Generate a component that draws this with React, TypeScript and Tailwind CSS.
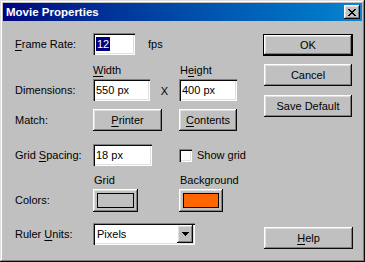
import React from 'react';

const raised =
  'bg-[#c0c0c0] shadow-[inset_-1px_-1px_#0a0a0a,inset_1px_1px_#ffffff,inset_-2px_-2px_#808080,inset_2px_2px_#dfdfdf]';
const sunken =
  'bg-white shadow-[inset_1px_1px_#808080,inset_2px_2px_#0a0a0a,inset_-1px_-1px_#ffffff,inset_-2px_-2px_#dfdfdf]';

const Label: React.FC<{ children: React.ReactNode }> = ({ children }) => (
  <div className="w-[78px] shrink-0 leading-[13px]">{children}</div>
);

const U: React.FC<{ children: React.ReactNode }> = ({ children }) => <span className="underline underline-offset-[2px]">{children}</span>;

const Field: React.FC<{ w: string; children: React.ReactNode }> = ({ w, children }) => (
  <div className={`${sunken} ${w} h-full flex items-center pl-[3px] leading-[13px]`}>{children}</div>
);

const Button: React.FC<{ className?: string; children: React.ReactNode }> = ({ className = '', children }) => (
  <div className={`${raised} h-full flex items-center justify-center leading-[13px] ${className}`}>{children}</div>
);

export default function App() {
  return (
    <div className="w-[365px] h-[262px] p-[3px] flex flex-col bg-[#c0c0c0] text-[11px] text-black font-['Liberation_Sans',Arial,sans-serif] shadow-[inset_-1px_-1px_#0a0a0a,inset_1px_1px_#dfdfdf,inset_-2px_-2px_#808080,inset_2px_2px_#ffffff]">
      {/* Title bar */}
      <div className="h-[18px] flex items-center justify-between pl-[3px] pr-[2px] bg-gradient-to-r from-[#000080] to-[#1084d0]">
        <span className="text-white font-bold text-[11.5px] leading-[14px]">Movie Properties</span>
        <div className={`${raised} w-[16px] h-[14px] flex items-center justify-center`}>
          <svg width="8" height="7" viewBox="0 0 8 7">
            <path d="M0 0h2v1h1v1h2v-1h1v-1h2v1h-1v1h-1v1h-1v1h1v1h1v1h1v1h-2v-1h-1v-1h-2v1h-1v1h-2v-1h1v-1h1v-1h1v-1h-1v-1h-1v-1h-1z" fill="#000" />
          </svg>
        </div>
      </div>

      {/* Body */}
      <div className="flex-1 flex pl-[12px] pr-[9px]">
        <div className="flex-1 flex flex-col pt-[12px]">
          <div className="h-[22px] flex items-center">
            <Label><U>F</U>rame Rate:</Label>
            <Field w="w-[42px]">
              <span className="bg-[#000080] text-white px-[1px] leading-[14px]">12</span>
            </Field>
            <span className="ml-[13px] leading-[13px]">fps</span>
          </div>

          <div className="mt-[9px] h-[13px] flex leading-[13px]">
            <div className="w-[78px]" />
            <div className="w-[86px]"><U>W</U>idth</div>
            <div className="pl-[1px]">H<U>e</U>ight</div>
          </div>

          <div className="mt-[2px] h-[22px] flex items-center">
            <Label>Dimensions:</Label>
            <Field w="w-[57px]">550 px</Field>
            <div className="w-[29px] flex justify-center pt-[3px] leading-[13px]">X</div>
            <Field w="w-[58px]">400 px</Field>
          </div>

          <div className="mt-[8px] h-[22px] flex items-center">
            <Label>Match:</Label>
            <Button className="w-[69px]"><span><U>P</U>rinter</span></Button>
            <Button className="w-[58px] ml-[17px]"><span><U>C</U>ontents</span></Button>
          </div>

          <div className="mt-[13px] h-[22px] flex items-center">
            <Label>Grid <U>S</U>pacing:</Label>
            <Field w="w-[59px]">18 px</Field>
            <div className={`${sunken} ml-[27px] w-[13px] h-[13px]`} />
            <span className="ml-[5px] leading-[13px]">Show grid</span>
          </div>

          <div className="mt-[8px] h-[13px] flex leading-[13px]">
            <div className="w-[79px]" />
            <div className="w-[86px]">Grid</div>
            <div>Background</div>
          </div>

          <div className="mt-[2px] h-[23px] flex items-center">
            <Label>Colors:</Label>
            <Button className="w-[45px]">
              <div className="w-[37px] h-[15px] border border-black bg-[#c0c0c0]" />
            </Button>
            <Button className="w-[44px] ml-[41px]">
              <div className="w-[36px] h-[15px] border border-black bg-[#ff6600]" />
            </Button>
          </div>

          <div className="mt-[11px] h-[22px] flex items-center">
            <Label>Ruler <U>U</U>nits:</Label>
            <div className={`${sunken} w-[102px] h-full flex items-center p-[2px]`}>
              <span className="flex-1 pl-[2px] leading-[13px]">Pixels</span>
              <div className={`${raised} w-[16px] h-full flex items-center justify-center`}>
                <svg width="7" height="4" viewBox="0 0 7 4">
                  <path d="M0 0h7v1h-1v1h-1v1h-1v1h-1v-1h-1v-1h-1v-1h-1z" fill="#000" />
                </svg>
              </div>
            </div>
          </div>
        </div>

        {/* Right buttons */}
        <div className="w-[90px] flex flex-col pt-[13px] pb-[10px]">
          <div className="h-[22px] border border-black">
            <Button>OK</Button>
          </div>
          <div className="mt-[8px] h-[22px] px-[1px]">
            <Button>Cancel</Button>
          </div>
          <div className="mt-[9px] h-[22px] px-[1px]">
            <Button>Save Default</Button>
          </div>
          <div className="mt-auto h-[22px] pl-[1px]">
            <Button><span><U>H</U>elp</span></Button>
          </div>
        </div>
      </div>
    </div>
  );
}
